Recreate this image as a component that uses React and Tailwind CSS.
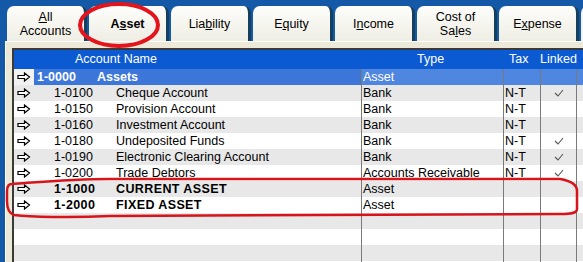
import React from 'react'

const font = { fontFamily: '"Liberation Sans", Arial, sans-serif' }

const tabs = [
  { pre: '', u: 'A', post: 'll', line2: 'Accounts' },
  { pre: 'A', u: 's', post: 'set', bold: true },
  { pre: 'Lia', u: 'b', post: 'ility' },
  { pre: 'E', u: 'q', post: 'uity' },
  { pre: 'I', u: 'n', post: 'come' },
  { line1: 'Cost of', pre: 'Sa', u: 'l', post: 'es' },
  { pre: 'E', u: 'x', post: 'pense' },
]

const rows = [
  { num: '1-0100', name: 'Cheque Account', type: 'Bank', tax: 'N-T', linked: true },
  { num: '1-0150', name: 'Provision Account', type: 'Bank', tax: 'N-T' },
  { num: '1-0160', name: 'Investment Account', type: 'Bank', tax: 'N-T' },
  { num: '1-0180', name: 'Undeposited Funds', type: 'Bank', tax: 'N-T', linked: true },
  { num: '1-0190', name: 'Electronic Clearing Account', type: 'Bank', tax: 'N-T', linked: true },
  { num: '1-0200', name: 'Trade Debtors', type: 'Accounts Receivable', tax: 'N-T', linked: true },
  { num: '1-1000', name: 'CURRENT ASSET', type: 'Asset', header: true },
  { num: '1-2000', name: 'FIXED ASSET', type: 'Asset', header: true },
  {}, {}, {}, {},
]

function Arrow() {
  return (
    <svg width="14" height="10" viewBox="0 0 14 10">
      <path d="M1 3.5 H7.5 V1 L12.5 5 L7.5 9 V6.5 H1 Z" fill="#fff" stroke="#000" strokeWidth="1.2" strokeLinejoin="miter" />
    </svg>
  )
}

function Check() {
  return (
    <svg width="10" height="8" viewBox="0 0 10 8">
      <path d="M1 4 L4 7 L9 1" fill="none" stroke="#555" strokeWidth="1.1" />
    </svg>
  )
}

function Tab({ t }) {
  return (
    <div className="w-[80px] h-[35px] shrink-0 rounded-t-[7px] bg-gradient-to-b from-[#fdfdfb] to-[#efeee4] border-r-[3px] border-[#163f5c] flex flex-col items-center justify-center leading-[14px] text-[12.5px] text-black">
      {t.line1 && <span>{t.line1}</span>}
      <span className={t.bold ? 'font-bold' : ''}>
        {t.pre}<span className="underline">{t.u}</span>{t.post}
      </span>
      {t.line2 && <span>{t.line2}</span>}
    </div>
  )
}

export default function App() {
  return (
    <div className="relative w-[583px] h-[262px] overflow-hidden bg-[#1458a8]" style={font}>
      <div className="flex gap-[2px] pl-[7px] pt-[6px]">
        {tabs.map((t, i) => <Tab key={i} t={t} />)}
        <div className="w-[20px] h-[35px] shrink-0 rounded-t-[7px] bg-[#f4f3ec]" />
      </div>

      <div className="ml-[5px] h-[230px] bg-[#ece9d8] border-t border-l border-[#ffffff] pl-[6px] pt-[6px]">
        <div className="h-full border-l-2 border-t-2 border-[#3a3a3a] bg-white text-[12.5px] text-black">
          {/* header */}
          <div className="flex h-[19px] items-center bg-[#0c5ad2] text-white">
            <div className="w-[20px]" />
            <div className="w-[327px] pl-[41px]">Account Name</div>
            <div className="w-[142px] pl-[56px]">Type</div>
            <div className="w-[37px] pl-[6px]">Tax</div>
            <div className="w-[38px] pl-[0px]">Linked</div>
          </div>

          {/* group row */}
          <div className="flex h-[16px] items-center bg-[#f2f2f2]">
            <div className="w-[20px] flex justify-center"><Arrow /></div>
            <div className="w-[327px] h-full flex items-center bg-[#3d76d9] text-white font-bold pl-[3px]">
              <span className="w-[60px]">1-0000</span>
              <span>Assets</span>
            </div>
            <div className="w-[142px] h-full flex items-center border-l border-[#7a7a7a] bg-[#4f86e0] text-white pl-[1px]">Asset</div>
            <div className="w-[37px] h-full border-l border-[#7a7a7a] bg-[#4f86e0]" />
            <div className="w-[36px] h-full border-l border-[#7a7a7a] bg-[#4f86e0]" />
            <div className="flex-1 h-full border-l border-[#7a7a7a] bg-[#4f86e0]" />
          </div>

          {rows.map((r, i) => (
            <div key={i} className={`flex h-[16px] items-center ${i % 2 === 0 ? 'bg-[#e8e8e8]' : 'bg-white'}`}>
              <div className="w-[20px] flex justify-center">{r.num && <Arrow />}</div>
              <div className={`w-[327px] flex items-center pl-[20px] ${r.header ? 'font-bold tracking-[0.4px]' : ''}`}>
                <span className="w-[62px]">{r.num}</span>
                <span>{r.name}</span>
              </div>
              <div className="w-[142px] h-full flex items-center border-l border-[#7a7a7a] pl-[1px]">{r.type}</div>
              <div className="w-[37px] h-full flex items-center border-l border-[#7a7a7a] pl-[1px]">{r.tax}</div>
              <div className="w-[36px] h-full flex items-center justify-center border-l border-[#7a7a7a]">{r.linked && <Check />}</div>
              <div className="flex-1 h-full border-l border-[#7a7a7a]" />
            </div>
          ))}
        </div>
      </div>

      {/* red annotations */}
      <svg className="absolute left-0 top-0 pointer-events-none" width="583" height="262">
        <ellipse cx="119" cy="25" rx="39" ry="21" fill="none" stroke="#e3141b" strokeWidth="4" />
        <path d="M12 184 C40 182 70 179 110 179 L560 179 C572 181 577 185 577 191 L577 209 C577 213 572 214 560 214 L110 216 C70 218 30 217 14 215 C8 213 7 207 7 201 L7 191 C7 186 9 184 12 184 Z" fill="none" stroke="#d8141b" strokeWidth="2.5" />
      </svg>
    </div>
  )
}
